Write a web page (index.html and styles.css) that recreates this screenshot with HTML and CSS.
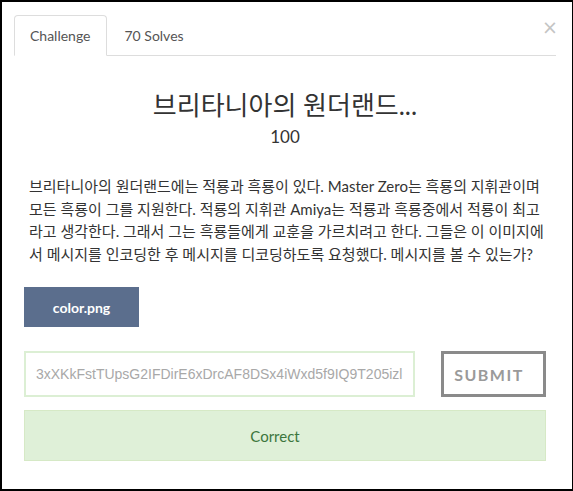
FILE: index.html
```html
<!DOCTYPE html>
<html lang="ko">
<head>
<meta charset="utf-8">
<link rel="stylesheet" href="styles.css">
</head>
<body>
<div class="modal">
  <button class="close" type="button">×</button>
  <ul class="tabs">
    <li class="tab active">Challenge</li>
    <li class="tab">70 Solves</li>
  </ul>
  <div class="content">
    <h3 class="title">브리타니아의 원더랜드...</h3>
    <h4 class="value">100</h4>
    <p class="desc">브리타니아의 원더랜드에는 적룡과 흑룡이 있다. Master Zero는 흑룡의 지휘관이며 모&#8288;든 흑룡이 그를 지원한다. 적룡의 지휘관 Amiya는 적룡과 흑룡중에서 적룡이 최고라고 생각한다. 그래서 그는 흑룡들에게 교훈을 가르치려고 한다. 그들은 이 이미지에서 메시지를 인코딩한 후 메시지를 디코딩하도록 요청했다. 메시지를 볼 수 있는가?</p>
    <div class="files"><a class="file-btn">color.png</a></div>
    <div class="submit-row">
      <input class="answer" type="text" value="3xXKkFstTUpsG2IFDirE6xDrcAF8DSx4iWxd5f9IQ9T205izl" readonly>
      <button class="submit" type="button">SUBMIT</button>
    </div>
    <div class="alert">Correct</div>
  </div>
</div>
</body>
</html>
```

FILE: styles.css
```css
* { box-sizing: border-box; }
html, body { margin: 0; padding: 0; background: #000; }
body {
  font-family: Lato, "Noto Sans CJK KR", sans-serif;
  color: #333;
}
.modal {
  position: relative;
  width: 573px;
  height: 491px;
  background: #fff;
  border: 2px solid #000;
  border-right-width: 1px;
  padding: 13px 16px 0 12px;
}
.close {
  position: absolute;
  top: 13px;
  right: 14px;
  border: 0;
  background: none;
  padding: 0;
  font-family: "DejaVu Sans", sans-serif;
  font-size: 19px;
  line-height: 24px;
  color: #c4c4c4;
}
.tabs {
  display: flex;
  margin: 0;
  padding: 0;
  list-style: none;
  border-bottom: 1px solid #ddd;
}
.tab {
  margin-right: 2px;
  margin-bottom: -1px;
  padding: 10px 15px;
  font-size: 14px;
  line-height: 19px;
  color: #555;
  border: 1px solid transparent;
  border-radius: 4px 4px 0 0;
}
.tab.active {
  background: #fff;
  border-color: #ddd #ddd #fff;
}
.content {
  padding: 0 10px;
}
.title {
  margin: 34px 0 0;
  font-size: 26px;
  font-weight: 400;
  line-height: 31px;
  text-align: center;
  color: #333;
}
.value {
  margin: 5px 0 0;
  font-size: 17px;
  font-weight: 400;
  line-height: 21px;
  text-align: center;
  color: #333;
}
.desc {
  margin: 28px 0 0;
  padding: 0 0 0 5px;
  font-size: 15px;
  line-height: 22.5px;
  color: #333;
}
.files {
  display: flex;
  margin-top: 22px;
}
.file-btn {
  display: flex;
  align-items: center;
  justify-content: center;
  width: 115px;
  height: 40px;
  background: #5b6e8d;
  color: #fff;
  font-size: 14px;
  font-weight: 700;
}
.submit-row {
  display: flex;
  justify-content: space-between;
  margin-top: 24px;
}
.answer {
  width: 391px;
  height: 46px;
  border: 2px solid #dcefd4;
  padding: 0 10px;
  font-family: "Liberation Sans", Arial, sans-serif;
  font-size: 14px;
  color: #a8a8a8;
  outline: none;
}
.submit {
  width: 105px;
  height: 46px;
  border: 3px solid #8a8a8a;
  background: #fff;
  font-family: Lato, sans-serif;
  font-size: 16px;
  font-weight: 700;
  letter-spacing: 1.5px;
  color: #9a9a9a;
  padding: 0 9px 0 0;
}
.alert {
  margin-top: 13px;
  height: 51px;
  padding: 0 35px 0 15px;
  display: flex;
  align-items: center;
  justify-content: center;
  background: #dff0d8;
  border: 1px solid #d6e9c6;
  color: #3c763d;
  font-size: 15px;
}
```
